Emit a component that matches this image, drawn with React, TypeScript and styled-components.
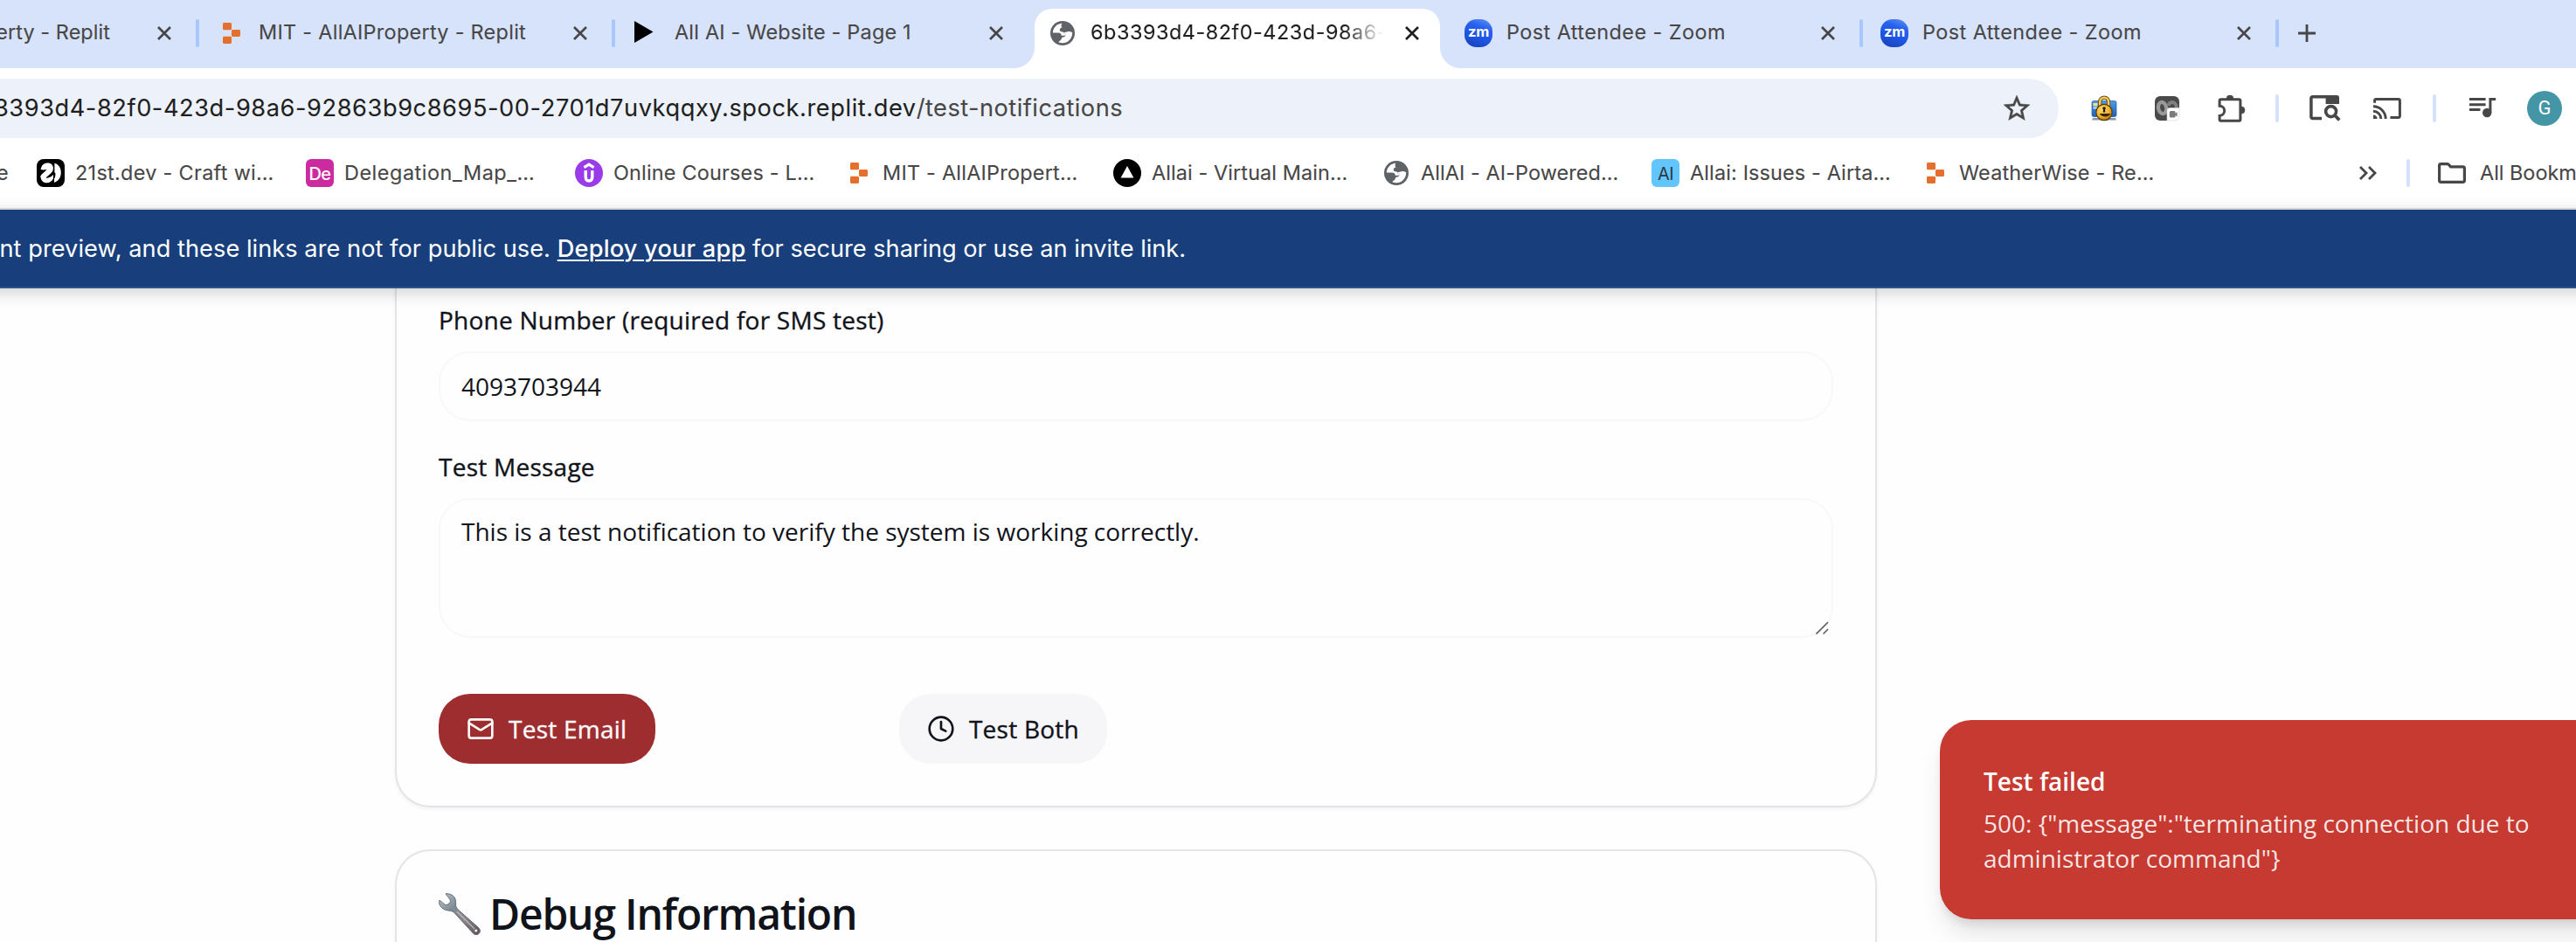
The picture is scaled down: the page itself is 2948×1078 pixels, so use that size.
import React from "react";
import styled, { createGlobalStyle, css } from "styled-components";
import { Mail, Clock } from "lucide-react";

const ui = `Inter, "Liberation Sans", sans-serif`;
const body = `"Open Sans", "Noto Sans", sans-serif`;

const GlobalStyle = createGlobalStyle`
  * { box-sizing: border-box; }
  body { margin: 0; background: #fefefe; overflow: hidden; }
`;

const Screen = styled.div`
  position: relative;
  width: 2948px;
  height: 1078px;
  overflow: hidden;
  display: flex;
  flex-direction: column;
  font-family: ${ui};
`;

const uiText = css`
  -webkit-text-stroke: 0.1px currentColor;
`;

/* ---------- tab strip ---------- */

const TabStrip = styled.div`
  flex: none;
  height: 78px;
  display: flex;
  background: #d7e2fb;
`;

const TabBox = styled.div<{ $active?: boolean }>`
  position: relative;
  flex: none;
  width: 472px;
  height: 76px;
  padding: 0 0 0 20px;
  display: flex;
  align-items: center;
  color: #474747;
  ${(p) =>
    p.$active &&
    css`
      width: 464px;
      height: 68px;
      margin: 10px 4px 0;
      padding: 0 0 12px 16px;
      color: #1f1f1f;
      background: #fff;
      border-radius: 20px 20px 0 0;
      &::before,
      &::after {
        content: "";
        position: absolute;
        bottom: 0;
        width: 24px;
        height: 24px;
      }
      &::before {
        left: -24px;
        background: radial-gradient(circle at 0 0, transparent 23.5px, #fff 24.5px);
      }
      &::after {
        right: -24px;
        background: radial-gradient(circle at 100% 0, transparent 23.5px, #fff 24.5px);
      }
    `}
`;

const CutTab = styled.div`
  flex: none;
  width: 224px;
  height: 76px;
  display: flex;
  align-items: center;
  color: #474747;
`;

const TabTitle = styled.div<{ $track: number; $fade?: boolean }>`
  width: 335px;
  margin: -2px 25px 0 16px;
  font-size: 23.4px;
  line-height: 32px;
  white-space: nowrap;
  overflow: hidden;
  letter-spacing: ${(p) => p.$track}px;
  ${uiText}
  ${(p) => p.$fade && css`mask-image: linear-gradient(90deg, #000 290px, transparent 335px);`}
`;

const CutTitle = styled.div`
  width: 126px;
  margin: -2px 54px 0 0;
  display: flex;
  justify-content: flex-end;
  font-size: 23.4px;
  line-height: 32px;
  white-space: nowrap;
  overflow: hidden;
  letter-spacing: 0.08px;
  ${uiText}
`;

const TabSep = styled.div<{ $hidden?: boolean }>`
  flex: none;
  width: 4px;
  height: 32px;
  margin-top: 22px;
  border-radius: 2px;
  background: ${(p) => (p.$hidden ? "transparent" : "#a8c7fa")};
`;

const NewTab = styled.div`
  display: flex;
  align-items: center;
  height: 76px;
  padding-left: 22px;
  color: #474747;
`;

const Svg = styled.svg`
  display: block;
  flex: none;
  overflow: visible;
`;

const CloseIcon = () => (
  <Svg width="16" height="16" viewBox="0 0 16 16" stroke="currentColor" strokeWidth="2.7" fill="none">
    <path d="M1 1L15 15M15 1L1 15" />
  </Svg>
);

/* ---------- site icons ---------- */

const Badge = styled.span<{ $bg: string; $fg: string; $radius: number; $size: number; $weight: number }>`
  flex: none;
  width: 32px;
  height: 32px;
  display: flex;
  align-items: center;
  justify-content: center;
  padding-top: 2px;
  border-radius: ${(p) => p.$radius}px;
  background: ${(p) => p.$bg};
  color: ${(p) => p.$fg};
  font-size: ${(p) => p.$size}px;
  font-weight: ${(p) => p.$weight};
  line-height: 1;
  letter-spacing: -0.6px;
`;

const ZoomMark = styled(Badge)`
  padding: 0 0 3px;
  letter-spacing: -0.3px;
`;

const ReplitIcon = () => (
  <Svg width="32" height="32" viewBox="0 0 32 32" fill="#e5702d">
    <rect x="7" y="4" width="10" height="8.3" rx="1.4" />
    <rect x="17" y="12" width="10" height="8" rx="1.4" />
    <rect x="7" y="19.7" width="10" height="8.3" rx="1.4" />
  </Svg>
);

const PlayIcon = () => (
  <Svg width="32" height="32" viewBox="0 0 32 32">
    <path d="M2 2L23.5 14.5L2 27Z" fill="#000" />
  </Svg>
);

const GlobeIcon = () => (
  <Svg width="32" height="32" viewBox="0 0 32 32">
    <circle cx="16" cy="16" r="14" fill="#5f6368" />
    <path
      d="M15.5 4.8C9.8 5 5.2 9.4 4.8 15.6H11.2C13.6 15.6 14.8 17 14.8 18.8H18.6C19.4 18.8 19.4 17.4 18.6 16.6L16.6 14.4C14.6 14.6 12.8 14 12.8 12.2C12.8 10.4 14.2 9.8 15.4 9.6C14.2 7.8 14.2 6 15.5 4.8Z"
      fill="#fff"
    />
    <path
      d="M27.2 15.2C25.6 14.4 23.6 13.8 21.8 14.2C20.6 14.6 18.8 14.8 17.6 15.2L19.4 17.6C19.6 19.6 18.4 20.4 16.8 20.4C14.8 20.4 15.2 22 14.2 23.6C13.4 24.8 12.2 25 11.4 26.2C18.6 29.4 27.2 24.6 27.2 15.2Z"
      fill="#fff"
    />
  </Svg>
);

const TwentyFirstIcon = () => (
  <Svg width="32" height="32" viewBox="0 0 32 32">
    <rect width="32" height="32" rx="8" fill="#000" />
    <path
      d="M4.6 11.8C5.4 6.8 8.6 4.4 12.6 4.4C16.6 4.4 18.9 7 18.9 10.4C18.9 15.6 14 17.6 10.4 21.6C14 22 17 20.6 18.9 17.8V22.4C17.4 25.4 14.6 27.2 11.6 27.2C7.4 27.2 4.6 24.4 4.3 19.4C6.2 16.2 9.8 14.6 11.6 11.8C9 12.6 6.6 12.8 4.6 11.8Z"
      fill="#fff"
    />
    <path d="M20.4 4.8C25.2 6 27.8 10.4 27.8 15.4C27.8 20.8 24.6 25.6 20 26.8V22.6C21.2 20.8 21.6 18.4 21.4 16.2L20.4 15.2Z" fill="#fff" />
  </Svg>
);

const CourseIcon = () => (
  <Svg width="32" height="32" viewBox="0 0 32 32" fill="none">
    <circle cx="16" cy="16" r="16" fill="#9a3bea" />
    <path d="M10.4 9.6L16 6.2L21.6 9.6" stroke="#fff" strokeWidth="3.2" />
    <path d="M12.2 13V20.6C12.2 23.4 13.6 25 16 25C18.4 25 19.8 23.4 19.8 20.6V13" stroke="#fff" strokeWidth="3.4" />
  </Svg>
);

const TriangleIcon = () => (
  <Svg width="32" height="32" viewBox="0 0 32 32">
    <circle cx="16" cy="16" r="16" fill="#000" />
    <path d="M16 8L23.4 21.6H8.6Z" fill="#fff" />
  </Svg>
);

const ZoomIcon = () => (
  <ZoomMark
    $bg="linear-gradient(200deg, #5f95f5 0%, #2660ee 32%, #1f55e6 60%, #1a3fb0 100%)"
    $fg="#fff"
    $radius={14}
    $size={16.5}
    $weight={700}
  >
    zm
  </ZoomMark>
);

/* ---------- toolbar ---------- */

const Toolbar = styled.div`
  flex: none;
  height: 92px;
  display: flex;
  align-items: center;
  background: #fff;
  color: #474747;
`;

const Omnibox = styled.div`
  flex: none;
  width: 2356px;
  height: 68px;
  padding-right: 30px;
  display: flex;
  align-items: center;
  justify-content: space-between;
  border-radius: 0 34px 34px 0;
  background: #edf2fa;
`;

const StarIcon = () => (
  <Svg width="36" height="36" viewBox="0 0 24 24" fill="currentColor">
    <path
      d="M22 9.24l-7.19-.62L12 2 9.19 8.63 2 9.24l5.46 4.73L5.82 21 12 17.27 18.18 21l-1.63-7.03L22 9.24zM12 15.4l-3.76 2.27 1-4.28-3.32-2.88 4.38-.38L12 6.1l1.71 4.04 4.38.38-3.32 2.88 1 4.28L12 15.4z"
      stroke="currentColor"
      strokeWidth=".3"
    />
  </Svg>
);

const Url = styled.div`
  width: 1285px;
  display: flex;
  justify-content: flex-end;
  overflow: hidden;
  white-space: nowrap;
  font-size: 27.2px;
  line-height: 40px;
  color: #474747;
  ${uiText}
`;

const Host = styled.span<{ $track: number }>`
  color: #1f1f1f;
  letter-spacing: ${(p) => p.$track}px;
`;

const Path = styled.span<{ $track: number }>`
  letter-spacing: ${(p) => p.$track}px;
`;

const Slot = styled.div<{ $gap: number; $w: number }>`
  flex: none;
  width: ${(p) => p.$w}px;
  height: 32px;
  margin-left: ${(p) => p.$gap}px;
`;

const BarSep = styled.div<{ $gap: number }>`
  flex: none;
  width: 4px;
  height: 32px;
  margin-left: ${(p) => p.$gap}px;
  border-radius: 2px;
  background: #d6e2fb;
`;

const Avatar = styled.div`
  flex: none;
  width: 40px;
  height: 40px;
  margin-left: 34px;
  display: flex;
  align-items: center;
  justify-content: center;
  border-radius: 50%;
  background: #4495a5;
  color: #fff;
  font: 400 22px/1 Roboto, sans-serif;
`;

const LockIcon = () => (
  <Svg width="32" height="32" viewBox="0 0 32 32">
    <defs>
      <linearGradient id="screenBlue" x1="0" y1="0" x2="0" y2="1">
        <stop offset="0" stopColor="#4f9be6" />
        <stop offset="1" stopColor="#1b62b8" />
      </linearGradient>
      <radialGradient id="lockGold" cx=".4" cy=".35" r=".7">
        <stop offset="0" stopColor="#ffdf70" />
        <stop offset=".6" stopColor="#f3b02c" />
        <stop offset="1" stopColor="#a86a10" />
      </radialGradient>
    </defs>
    <rect x="2" y="7.5" width="28" height="18" rx="2" fill="url(#screenBlue)" stroke="#1e5aa5" strokeWidth=".7" />
    <rect x="3.5" y="10" width="5" height="3.4" fill="#f7e37c" />
    <rect x="3.5" y="14.5" width="5" height="2" fill="#cfe4fb" />
    <path d="M3 27h26l1 2.4H2z" fill="#8a97a6" />
    <path d="M11.2 14.5V8.5a4.9 4.9 0 0 1 9.8 0v6" fill="none" stroke="#6e4a0c" strokeWidth="4.2" />
    <path d="M11.2 14.5V8.5a4.9 4.9 0 0 1 9.8 0v6" fill="none" stroke="#f6cf63" strokeWidth="2.4" />
    <circle cx="16" cy="20.5" r="9.2" fill="url(#lockGold)" stroke="#5b3b06" strokeWidth="1.2" />
    <path d="M10.8 22H23.4C22.4 24.4 20 25.4 17.2 25.4C14.2 25.4 11.8 24.4 10.8 22Z" fill="#3a2706" />
    <circle cx="16" cy="16" r="1.8" fill="#2a1c05" />
    <path d="M15.2 16h1.6l.6 4.4h-2.8z" fill="#2a1c05" />
  </Svg>
);

const RecorderIcon = () => (
  <Svg width="32" height="32" viewBox="0 0 32 32" fill="none">
    <rect x="2" y="2" width="28" height="28" rx="6" fill="#4a4a4a" />
    <ellipse cx="10.6" cy="15.5" rx="4.6" ry="6.6" stroke="#999" strokeWidth="4.2" transform="rotate(-12 10.6 15.5)" />
    <path d="M17.5 13C18.5 8.8 22.6 8 25 10.4S27 14.6 27 17" stroke="#808080" strokeWidth="4" />
    <path d="M16 18.5a3 3 0 0 1 3-3H30V25a5 5 0 0 1-5 5H16z" fill="#fff" stroke="#d5d5d5" strokeWidth=".6" />
    <rect x="18.8" y="19" width="6.8" height="7.6" rx="1.6" fill="#7c7c7c" />
    <path d="M24.6 22.4l3-2.2v5.4l-3-2.2z" fill="#7c7c7c" />
  </Svg>
);

const PuzzleIcon = () => (
  <Svg width="32" height="32" viewBox="0 0 32 32">
    <path
      d="M2.1 11.6V7.3Q2.1 5.8 3.6 5.8H24.4Q25.9 5.8 25.9 7.3V28.8Q25.9 30.3 24.4 30.3H3.6Q2.1 30.3 2.1 28.8V24.4A5.2 5.2 0 0 0 2.1 13.2V11.6"
      fill="none"
      stroke="currentColor"
      strokeWidth="3"
    />
    <path d="M10 5a4 4 0 0 1 8 0zM27 14a4 4 0 0 1 0 8z" fill="currentColor" stroke="currentColor" strokeWidth=".6" />
  </Svg>
);

const TabSearchIcon = () => (
  <Svg width="36" height="32" viewBox="0 -1 36 32" fill="none" stroke="currentColor">
    <path d="M14 26.4H3.8Q1.9 26.4 1.9 24.5V3.6Q1.9 1.8 3.8 1.8H20" strokeWidth="3.5" />
    <path d="M18.6 0H31.4Q34 0 34 2.6V10H18.6Z" fill="currentColor" stroke="none" />
    <circle cx="24.6" cy="18.6" r="6" strokeWidth="3.6" />
    <path d="M28.8 22.8L34.2 28.4" strokeWidth="3.8" />
  </Svg>
);

const CastIcon = () => (
  <Svg width="32" height="32" viewBox="0 -4 32 32" fill="none" stroke="currentColor" strokeWidth="3">
    <path d="M1.6 5.8V3.2Q1.6 1.6 3.2 1.6H28.8Q30.4 1.6 30.4 3.2V20.8Q30.4 22.4 28.8 22.4H19.4" />
    <path d="M0 19.4A4.6 4.6 0 0 1 4.6 24H0Z" fill="currentColor" stroke="none" />
    <path d="M0 15.2A8.8 8.8 0 0 1 8.8 24M0 9.8A14.2 14.2 0 0 1 14.2 24" strokeWidth="2.9" />
  </Svg>
);

const QueueIcon = () => (
  <Svg width="32" height="32" viewBox="0 -4 32 32" fill="none" stroke="currentColor" strokeWidth="3">
    <path d="M0 1.5H18.6M0 7.8H18.6M0 13.5H12.4" />
    <path d="M23.9 17V1.5H30.2" />
    <circle cx="20.2" cy="17" r="5.2" fill="currentColor" stroke="none" />
  </Svg>
);

/* ---------- bookmarks ---------- */

const Bookmarks = styled.div`
  flex: none;
  height: 70px;
  padding-bottom: 12px;
  display: flex;
  align-items: center;
  background: #fff;
  border-bottom: 2px solid #dfe0e2;
  color: #474747;
`;

const CutMark = styled.div`
  flex: none;
  width: 42px;
  margin-top: -1px;
  text-indent: -4px;
  font-size: 23.4px;
  line-height: 32px;
  ${uiText}
`;

const BookmarkBox = styled.div`
  flex: none;
  width: 308px;
  display: flex;
  align-items: center;
  gap: 12px;
`;

const MarkLabel = styled.span<{ $track?: number }>`
  margin-top: -1px;
  font-size: 23.4px;
  line-height: 32px;
  white-space: nowrap;
  letter-spacing: ${(p) => p.$track ?? 0}px;
  ${uiText}
`;

const MoreSlot = styled.div`
  flex: none;
  width: 248px;
  display: flex;
  justify-content: flex-end;
  padding-right: 34px;
`;

const AllBookmarks = styled.div`
  flex: none;
  margin-left: 32px;
  display: flex;
  align-items: center;
  gap: 16px;
`;

const FolderIcon = () => (
  <Svg width="32" height="24" viewBox="0 0 32 24" fill="none" stroke="currentColor" strokeWidth="3.2">
    <path d="M1.6 3.4Q1.6 1.6 3.4 1.6H10.6Q11.6 1.6 12.3 2.3L14.6 4.8H28.6Q30.4 4.8 30.4 6.6V20.6Q30.4 22.4 28.6 22.4H3.4Q1.6 22.4 1.6 20.6Z" />
  </Svg>
);

const ChevronsIcon = () => (
  <Svg width="20" height="16" viewBox="0 0 20 16" fill="none" stroke="currentColor" strokeWidth="2.8">
    <path d="M1 1L8 8L1 15M11 1L18 8L11 15" />
  </Svg>
);

/* ---------- preview banner ---------- */

const Banner = styled.div`
  position: relative;
  flex: none;
  height: 90px;
  margin: 0 -40px;
  padding-left: 40px;
  display: flex;
  align-items: center;
  background: #183f7c;
  border-bottom: 2px solid #31538b;
  box-shadow: 0 4px 18px rgba(0, 0, 0, 0.2);
  color: #fff;
`;

const BannerText = styled.div`
  width: 1357px;
  padding-top: 1px;
  display: flex;
  justify-content: flex-end;
  white-space: pre;
  font-size: 27.2px;
  line-height: 40px;
`;

const BannerPart = styled.span<{ $track: number }>`
  letter-spacing: ${(p) => p.$track}px;
`;

const DeployLink = styled.a<{ $track: number }>`
  letter-spacing: ${(p) => p.$track}px;
  font-weight: 500;
  text-decoration: underline;
  text-decoration-thickness: 2px;
  text-underline-offset: 3px;
`;

/* ---------- page ---------- */

const Page = styled.main`
  flex: none;
  width: 1696px;
  margin-left: 452px;
  display: flex;
  flex-direction: column;
  gap: 48px;
  font-family: ${body};
  color: #11131a;
`;

const Card = styled.section<{ $open?: "top" | "bottom" }>`
  padding: 48px;
  border: 2px solid #e4e4e9;
  background: #fefefe;
  box-shadow: 0 2px 4px rgba(0, 0, 0, 0.05);
  ${(p) =>
    p.$open === "top"
      ? css`
          border-top: 0;
          padding-top: 22px;
          border-radius: 0 0 40px 40px;
        `
      : css`
          border-bottom: 0;
          border-radius: 40px 40px 0 0;
        `}
`;

const medium = css`
  font-weight: 400;
  letter-spacing: 0.25px;
  -webkit-text-stroke: 0.35px currentColor;
`;

const FieldLabel = styled.label`
  display: block;
  margin-bottom: 22px;
  font-size: 28px;
  line-height: 28px;
  ${medium}
`;

const Field = styled.div<{ $h: number }>`
  position: relative;
  height: ${(p) => p.$h}px;
  padding: 18px 24px;
  border: 2px solid #f8f8fa;
  border-radius: 36px;
  font-size: 28px;
  line-height: 40px;
`;

const MessageLabel = styled(FieldLabel)`
  margin-top: 38px;
`;

const MessageField = styled(Field)`
  padding-top: 16px;
`;

const Resizer = styled.svg`
  position: absolute;
  right: 2px;
  bottom: 1px;
`;

const Actions = styled.div`
  display: grid;
  grid-template-columns: 248px 238px;
  column-gap: 279px;
  margin-top: 64px;
`;

const Button = styled.button<{ $primary?: boolean }>`
  height: 80px;
  padding: 0 32px;
  display: flex;
  align-items: center;
  gap: 16px;
  border: 0;
  border-radius: 36px;
  background: ${(p) => (p.$primary ? "#9d2d2f" : "#f6f6f9")};
  color: ${(p) => (p.$primary ? "#fdfdfd" : "#11131a")};
  font: 400 28px/40px ${body};
  white-space: nowrap;
`;

const ButtonLabel = styled.span`
  ${medium}
`;

const Heading = styled.h3`
  margin: 0;
  height: 56px;
  display: flex;
  align-items: flex-start;
  gap: 10px;
  font-size: 48px;
  font-weight: 600;
  line-height: 48px;
  letter-spacing: -1.2px;
  white-space: nowrap;
`;

const WrenchIcon = () => (
  <Svg width="48" height="48" viewBox="0 0 48 48">
    <defs>
      <linearGradient id="steel" x1="0" y1="0" x2="1" y2="1">
        <stop offset="0" stopColor="#b9c6d0" />
        <stop offset=".35" stopColor="#7d8a95" />
        <stop offset=".6" stopColor="#8d8486" />
        <stop offset="1" stopColor="#5e5558" />
      </linearGradient>
    </defs>
    <path
      d="M8 .8C11.6 .2 15.8 1.6 18 4.8C20 7.8 19.6 11 19.6 14.2C19.8 16.6 21.6 18 23.4 20L45.6 39.6C48 42 47.8 44.6 46 46.4C44 48.2 41.4 48 39.4 46L18.8 23.4C16.8 21.2 15 20.4 12.6 20.2C7 19.8 2.4 17.2 1 13C.4 11.4 .4 9.6 1 8.2L7.4 13.4C9.4 14.2 12.8 12 13.4 9.6C13.8 7.4 10.6 4.6 8 .8Z"
      fill="url(#steel)"
      stroke="#59626b"
      strokeWidth=".9"
    />
    <path d="M21.4 21.6L41 41" stroke="#c5c9ce" strokeWidth="1.6" strokeLinecap="round" opacity=".7" />
    <circle cx="42.8" cy="43" r="2.1" fill="#f4f4f4" stroke="#4a4346" strokeWidth=".8" />
  </Svg>
);

/* ---------- toast ---------- */

const Toast = styled.div`
  position: absolute;
  left: 2220px;
  top: 824px;
  width: 840px;
  height: 228px;
  padding: 50px;
  display: flex;
  flex-direction: column;
  gap: 8px;
  border-radius: 36px;
  background: #c63a31;
  box-shadow: 0 20px 30px -6px rgba(0, 0, 0, 0.12), 0 8px 12px -4px rgba(0, 0, 0, 0.1);
  font: 400 28px/40px ${body};
`;

const ToastTitle = styled.div`
  font-weight: 600;
  color: #fff;
`;

const ToastText = styled.div`
  width: 650px;
  color: rgba(255, 255, 255, 0.88);
`;

const bookmarks: { icon: React.ReactNode; label: string; track: number }[] = [
  { icon: <TwentyFirstIcon />, label: "21st.dev - Craft wi…", track: 0.32 },
  { icon: <Badge $bg="#cc2ba0" $fg="#fff" $radius={6} $size={20} $weight={500}>De</Badge>, label: "Delegation_Map_…", track: 0.55 },
  { icon: <CourseIcon />, label: "Online Courses - L…", track: 0.2 },
  { icon: <ReplitIcon />, label: "MIT - AllAIPropert…", track: 0.25 },
  { icon: <TriangleIcon />, label: "Allai - Virtual Main…", track: 0.11 },
  { icon: <GlobeIcon />, label: "AllAI - AI-Powered…", track: 0.1 },
  { icon: <Badge $bg="#62c6fc" $fg="#2b3a44" $radius={6} $size={20} $weight={400}>AI</Badge>, label: "Allai: Issues - Airta…", track: 0.15 },
  { icon: <ReplitIcon />, label: "WeatherWise - Re…", track: 0.2 },
];

export default function App() {
  return (
    <Screen>
      <GlobalStyle />
      <TabStrip>
        <CutTab>
          <CutTitle>erty - Replit</CutTitle>
          <CloseIcon />
        </CutTab>
        <TabSep />
        <TabBox>
          <ReplitIcon />
          <TabTitle $track={0.3}>MIT - AllAIProperty - Replit</TabTitle>
          <CloseIcon />
        </TabBox>
        <TabSep />
        <TabBox>
          <PlayIcon />
          <TabTitle $track={0.22}>All AI - Website - Page 1</TabTitle>
          <CloseIcon />
        </TabBox>
        <TabSep $hidden />
        <TabBox $active>
          <GlobeIcon />
          <TabTitle $track={0.54} $fade>6b3393d4-82f0-423d-98a6-</TabTitle>
          <CloseIcon />
        </TabBox>
        <TabSep $hidden />
        <TabBox>
          <ZoomIcon />
          <TabTitle $track={0.45}>Post Attendee - Zoom</TabTitle>
          <CloseIcon />
        </TabBox>
        <TabSep />
        <TabBox>
          <ZoomIcon />
          <TabTitle $track={0.45}>Post Attendee - Zoom</TabTitle>
          <CloseIcon />
        </TabBox>
        <TabSep />
        <NewTab>
          <Svg width="20" height="20" viewBox="0 0 20 20" stroke="currentColor" strokeWidth="2.8">
            <path d="M10 0V20M0 10H20" />
          </Svg>
        </NewTab>
      </TabStrip>

      <Toolbar>
        <Omnibox>
          <Url>
            <Host $track={0.576}>3393d4-82f0-423d-98a6-92863b9c8695-00-2701d7uvkqqxy.spock.replit.dev</Host>
            <Path $track={0.478}>/test-notifications</Path>
          </Url>
          <StarIcon />
        </Omnibox>
        <Slot $gap={36} $w={32}><LockIcon /></Slot>
        <Slot $gap={40} $w={32}><RecorderIcon /></Slot>
        <Slot $gap={42} $w={32}><PuzzleIcon /></Slot>
        <BarSep $gap={34} />
        <Slot $gap={35} $w={36}><TabSearchIcon /></Slot>
        <Slot $gap={37} $w={32}><CastIcon /></Slot>
        <BarSep $gap={36} />
        <Slot $gap={38} $w={32}><QueueIcon /></Slot>
        <Avatar>G</Avatar>
      </Toolbar>

      <Bookmarks>
        <CutMark>e</CutMark>
        {bookmarks.map((b) => (
          <BookmarkBox key={b.label}>
            {b.icon}
            <MarkLabel $track={b.track}>{b.label}</MarkLabel>
          </BookmarkBox>
        ))}
        <MoreSlot>
          <ChevronsIcon />
        </MoreSlot>
        <BarSep $gap={0} />
        <AllBookmarks>
          <FolderIcon />
          <MarkLabel>All Bookmarks</MarkLabel>
        </AllBookmarks>
      </Bookmarks>

      <Banner>
        <BannerText>
          <BannerPart $track={0.04}>nt preview, and these links are not for public use. </BannerPart>
          <DeployLink $track={0.2}>Deploy your app</DeployLink>
          <BannerPart $track={-0.03}> for secure sharing or use an invite link.</BannerPart>
        </BannerText>
      </Banner>

      <Page>
        <Card $open="top">
          <FieldLabel>Phone Number (required for SMS test)</FieldLabel>
          <Field $h={80}>4093703944</Field>
          <MessageLabel>Test Message</MessageLabel>
          <MessageField $h={160}>
            This is a test notification to verify the system is working correctly.
            <Resizer width="16" height="16" viewBox="0 0 16 16" stroke="#5c5c5c" strokeWidth="1.6">
              <path d="M0.5 14.5L14 1M8.5 14.5L14 9" />
            </Resizer>
          </MessageField>
          <Actions>
            <Button $primary>
              <Mail size={32} strokeWidth={2} />
              <ButtonLabel>Test Email</ButtonLabel>
            </Button>
            <Button>
              <Clock size={32} strokeWidth={2} />
              <ButtonLabel>Test Both</ButtonLabel>
            </Button>
          </Actions>
        </Card>
        <Card $open="bottom">
          <Heading>
            <WrenchIcon />
            Debug Information
          </Heading>
        </Card>
      </Page>

      <Toast>
        <ToastTitle>Test failed</ToastTitle>
        <ToastText>500: {'{"message":"terminating connection due to administrator command"}'}</ToastText>
      </Toast>
    </Screen>
  );
}
